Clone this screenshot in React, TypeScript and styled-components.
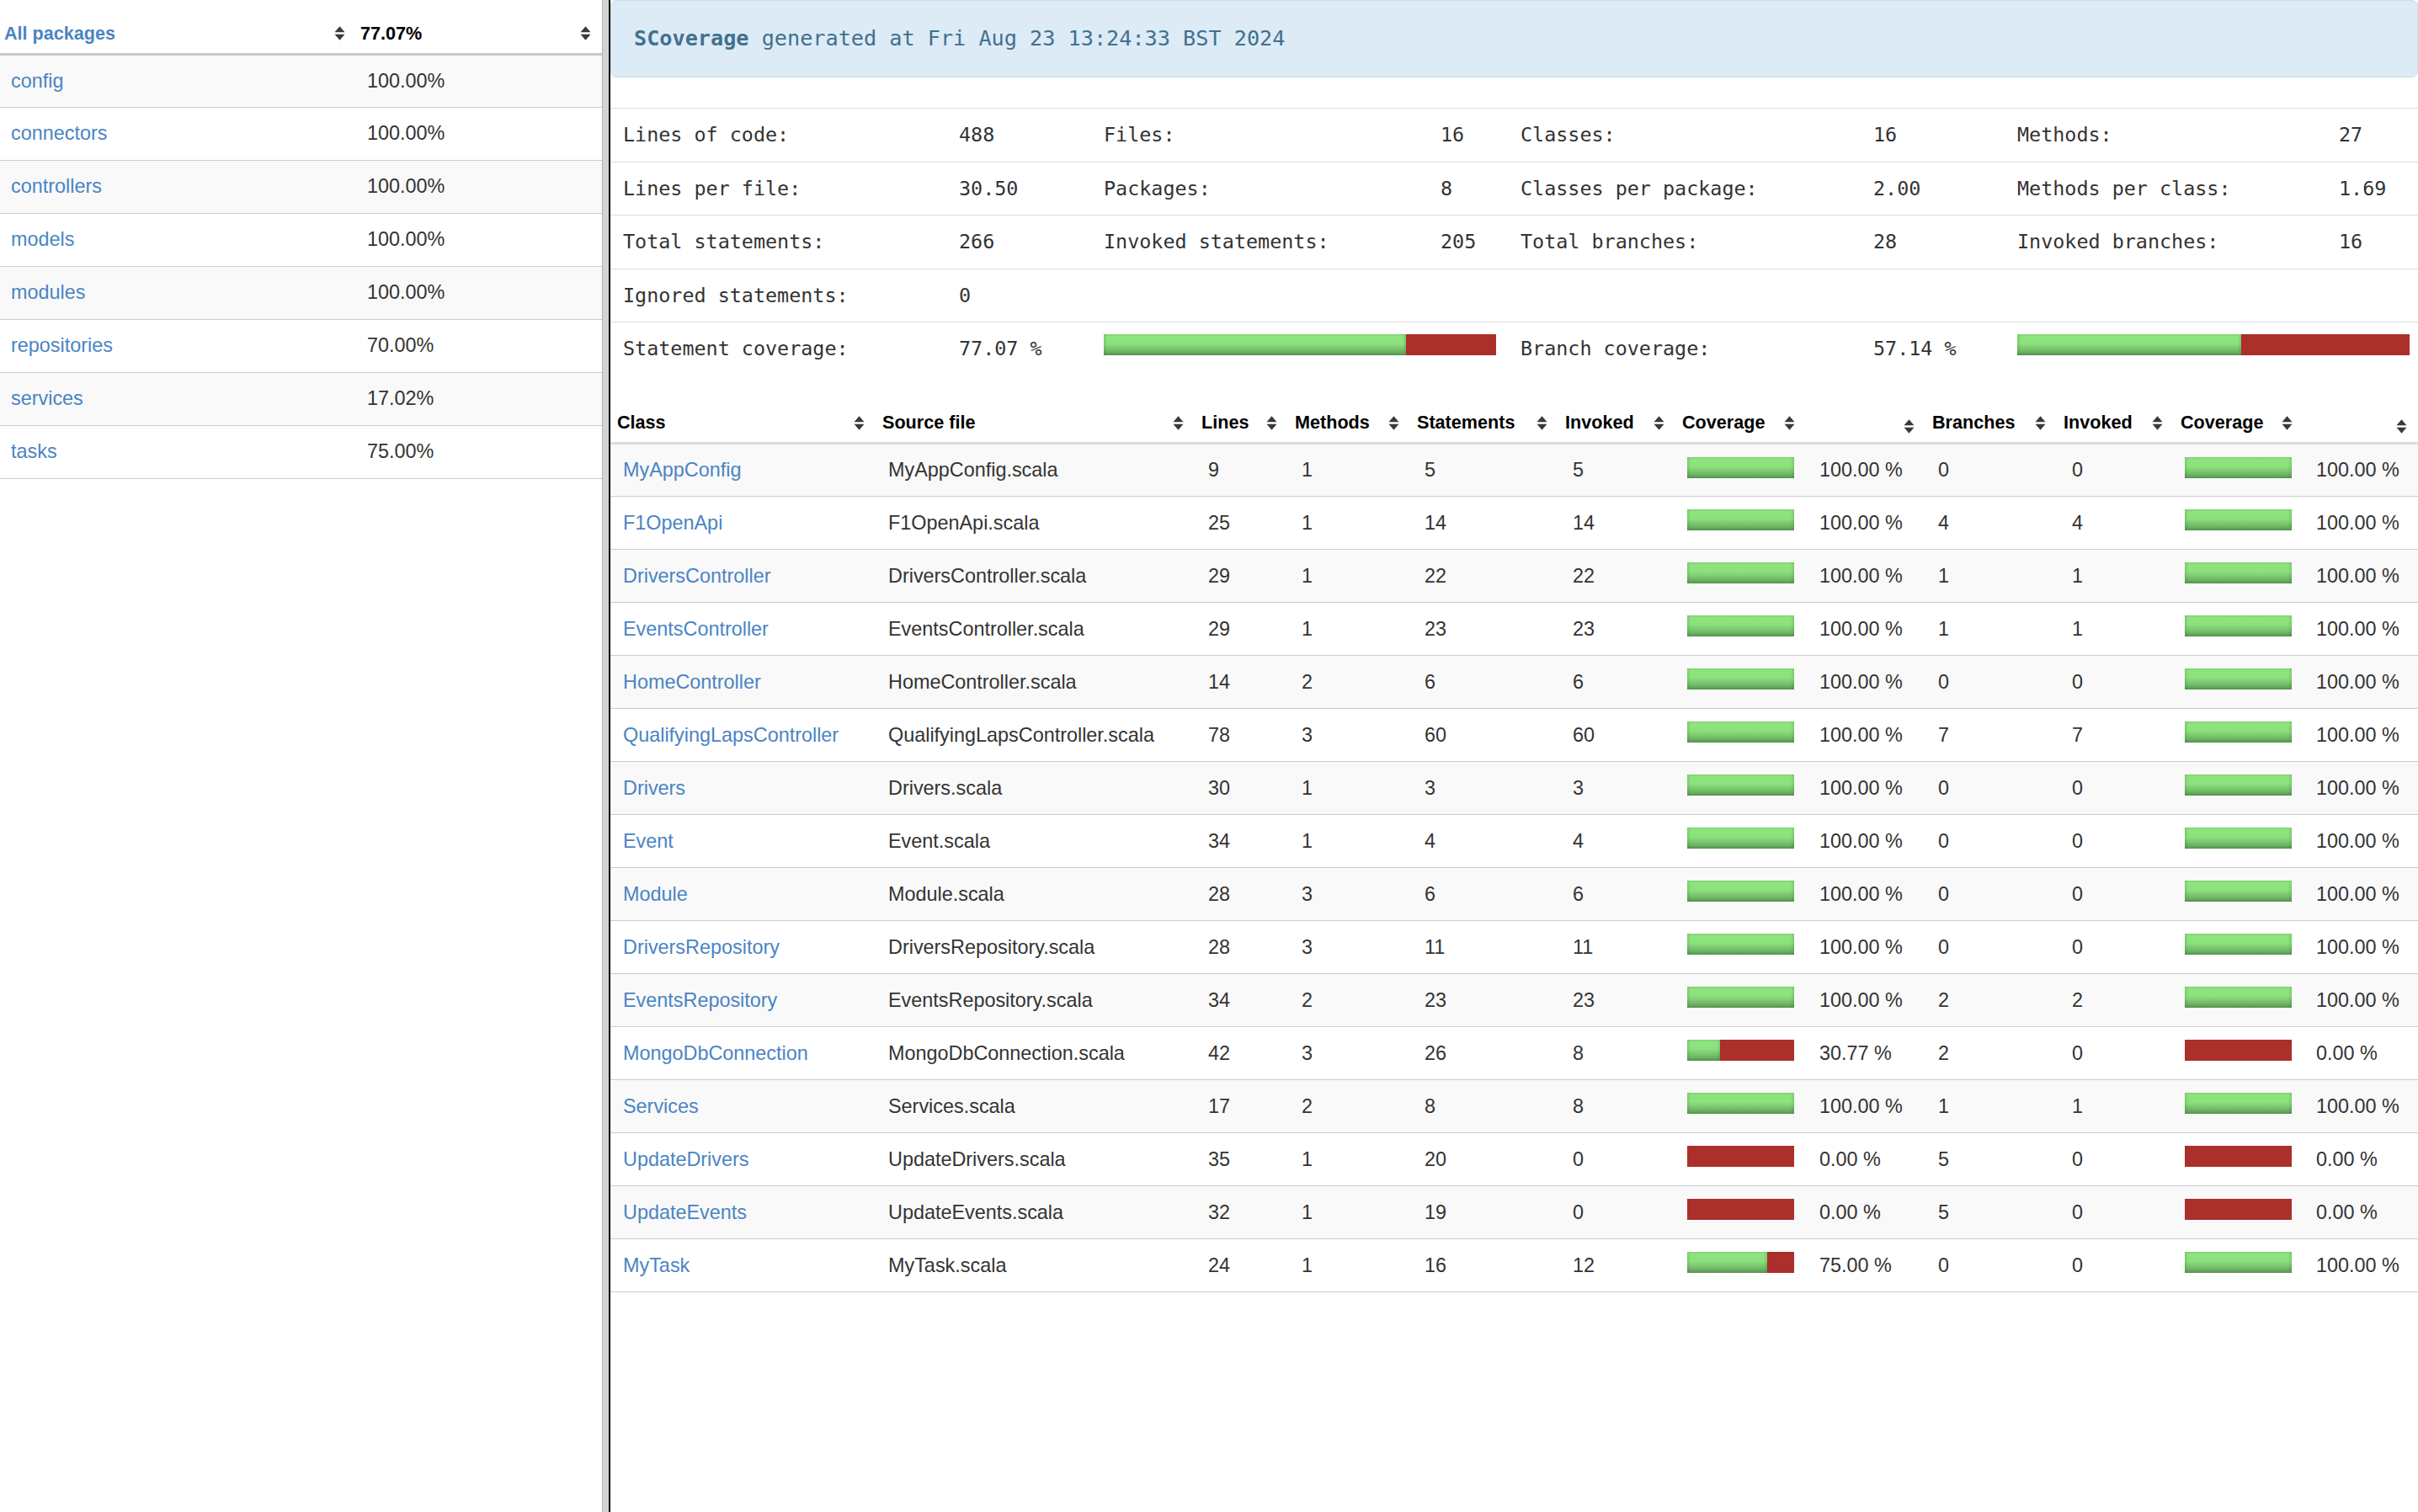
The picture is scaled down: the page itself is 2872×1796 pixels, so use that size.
import React from "react";
import styled, { createGlobalStyle } from "styled-components";

const GlobalStyle = createGlobalStyle`
  html, body { margin: 0; padding: 0; background: #fff; }
  body {
    font-family: "Liberation Sans", Arial, Helvetica, sans-serif;
    font-size: 23.4px;
    color: #333;
  }
  * { box-sizing: border-box; }
`;

const Page = styled.div`
  display: flex;
  width: 100%;
  height: 100vh;
  overflow: hidden;
`;

const LeftFrame = styled.div`
  width: 715px;
  flex: none;
  background: #fff;
`;

const FrameDivider = styled.div`
  width: 10px;
  flex: none;
  background: #d3d3d3;
  border-left: 1px solid #b3b3b3;
  border-right: 2px solid #000;
`;

const RightFrame = styled.div`
  flex: 1;
  min-width: 0;
  background: #fff;
`;

/* ---------- shared table parts ---------- */

const Table = styled.table`
  width: 100%;
  border-collapse: collapse;
  table-layout: fixed;
`;

const HeadCell = styled.th<{ $thick: string }>`
  height: 64px;
  padding: 0;
  vertical-align: bottom;
  text-align: left;
  border-bottom: 3px solid ${(p) => p.$thick};
`;

const HeadInner = styled.div<{ $padLeft: number }>`
  display: flex;
  align-items: center;
  justify-content: space-between;
  padding: 0 13px 10px ${(p) => p.$padLeft}px;
  font-size: 21.6px;
  font-weight: bold;
  line-height: 26px;
  color: #000;
  white-space: nowrap;
`;

const HeadLink = styled.a`
  color: #4a84c4;
  text-decoration: none;
`;

const Row = styled.tr<{ $odd: boolean }>`
  background: ${(p) => (p.$odd ? "#f9f9f9" : "#fff")};
`;

const Cell = styled.td<{ $padLeft: number }>`
  height: 63px;
  padding: 0 0 0 ${(p) => p.$padLeft}px;
  border-bottom: 1px solid #cccccc;
  vertical-align: middle;
  white-space: nowrap;
  line-height: 27px;
  color: #333;
`;

const ItemLink = styled.a`
  color: #4a84c4;
  text-decoration: none;
`;

const SortIcon = () => (
  <svg width="13" height="17" viewBox="0 0 13 17" aria-hidden="true">
    <path d="M0.5 7.3 L6.5 0.3 L12.5 7.3 Z M0.5 9.7 L12.5 9.7 L6.5 16.7 Z" fill="#3a3a3a" />
  </svg>
);

/* ---------- meter ---------- */

const MeterTrack = styled.div<{ $w: number }>`
  display: flex;
  width: ${(p) => p.$w}px;
  height: 25px;
  background: #ab2f2b;
  flex: none;
`;

const MeterCovered = styled.div`
  height: 100%;
  background: linear-gradient(
    to bottom,
    #90e580 0%,
    #8be17b 45%,
    #77c26d 72%,
    #5c9a55 100%
  );
  box-shadow: inset 2px 0 3px rgba(40, 90, 35, 0.18), inset -2px 0 3px rgba(40, 90, 35, 0.18);
`;

const Meter = ({ pct, width }: { pct: number; width: number }) => (
  <MeterTrack $w={width}>
    <MeterCovered style={{ width: `${pct}%` }} />
  </MeterTrack>
);

const MeterCellWrap = styled.div`
  display: flex;
  align-items: center;
  padding-bottom: 7px;
`;

/* ---------- left frame ---------- */

const packages: [string, string][] = [
  ["config", "100.00%"],
  ["connectors", "100.00%"],
  ["controllers", "100.00%"],
  ["models", "100.00%"],
  ["modules", "100.00%"],
  ["repositories", "70.00%"],
  ["services", "17.02%"],
  ["tasks", "75.00%"],
];

const PackageList = () => (
  <Table>
    <colgroup>
      <col style={{ width: 423 }} />
      <col />
    </colgroup>
    <thead>
      <tr>
        <HeadCell $thick="#c9c9c9">
          <HeadInner $padLeft={5}>
            <HeadLink href="#">All packages</HeadLink>
            <SortIcon />
          </HeadInner>
        </HeadCell>
        <HeadCell $thick="#c9c9c9">
          <HeadInner $padLeft={5}>
            <span>77.07%</span>
            <SortIcon />
          </HeadInner>
        </HeadCell>
      </tr>
    </thead>
    <tbody>
      {packages.map(([name, pct], i) => (
        <Row key={name} $odd={i % 2 === 0}>
          <Cell $padLeft={13}>
            <ItemLink href="#">{name}</ItemLink>
          </Cell>
          <Cell $padLeft={13}>{pct}</Cell>
        </Row>
      ))}
    </tbody>
  </Table>
);

/* ---------- banner ---------- */

const Banner = styled.div`
  background: #dcebf6;
  border: 1px solid #c4e1ef;
  border-radius: 7px;
  padding: 30px 27px;
  font-family: "DejaVu Sans Mono", "Liberation Mono", monospace;
  font-size: 25.2px;
  line-height: 30px;
  color: #41718f;
  white-space: nowrap;
`;

const BannerTitle = styled.b`
  font-weight: bold;
`;

/* ---------- overview stats ---------- */

const statCols = "399px 172px 400px 95px 419px 171px 382px 1fr";

const Stats = styled.div`
  margin-top: 36px;
  font-family: "DejaVu Sans Mono", "Liberation Mono", monospace;
  font-size: 23.4px;
  color: #333;
`;

const StatRow = styled.div`
  display: grid;
  grid-template-columns: ${statCols};
  height: 63.5px;
  align-items: center;
  border-top: 1px solid #dddddd;
`;

const StatCell = styled.div<{ $span?: number }>`
  padding-left: 15px;
  white-space: nowrap;
  grid-column: span ${(p) => p.$span ?? 1};
  display: flex;
  align-items: center;
`;

const StatMeterCell = styled(StatCell)`
  padding-bottom: 9px;
`;

const statRows: [string, string][][] = [
  [
    ["Lines of code:", "488"],
    ["Files:", "16"],
    ["Classes:", "16"],
    ["Methods:", "27"],
  ],
  [
    ["Lines per file:", "30.50"],
    ["Packages:", "8"],
    ["Classes per package:", "2.00"],
    ["Methods per class:", "1.69"],
  ],
  [
    ["Total statements:", "266"],
    ["Invoked statements:", "205"],
    ["Total branches:", "28"],
    ["Invoked branches:", "16"],
  ],
];

const OverviewStats = () => (
  <Stats>
    {statRows.map((row, i) => (
      <StatRow key={i}>
        {row.map(([label, value]) => (
          <React.Fragment key={label}>
            <StatCell>{label}</StatCell>
            <StatCell>{value}</StatCell>
          </React.Fragment>
        ))}
      </StatRow>
    ))}
    <StatRow>
      <StatCell>Ignored statements:</StatCell>
      <StatCell>0</StatCell>
    </StatRow>
    <StatRow>
      <StatCell>Statement coverage:</StatCell>
      <StatCell>77.07 %</StatCell>
      <StatMeterCell $span={2}>
        <Meter pct={77.07} width={466} />
      </StatMeterCell>
      <StatCell>Branch coverage:</StatCell>
      <StatCell>57.14 %</StatCell>
      <StatMeterCell $span={2}>
        <Meter pct={57.14} width={466} />
      </StatMeterCell>
    </StatRow>
  </Stats>
);

/* ---------- classes table ---------- */

const ClassTableWrap = styled.div`
  margin-top: 17px;
`;

const colWidths = [315, 379, 111, 145, 176, 139, 155, 142, 156, 139, 154, 136];
const headers = [
  "Class",
  "Source file",
  "Lines",
  "Methods",
  "Statements",
  "Invoked",
  "Coverage",
  "",
  "Branches",
  "Invoked",
  "Coverage",
  "",
];

type ClassRow = {
  name: string;
  lines: number;
  methods: number;
  stmts: number;
  invoked: number;
  cov: number;
  branches: number;
  bInvoked: number;
  bCov: number;
};

const classes: ClassRow[] = [
  { name: "MyAppConfig", lines: 9, methods: 1, stmts: 5, invoked: 5, cov: 100, branches: 0, bInvoked: 0, bCov: 100 },
  { name: "F1OpenApi", lines: 25, methods: 1, stmts: 14, invoked: 14, cov: 100, branches: 4, bInvoked: 4, bCov: 100 },
  { name: "DriversController", lines: 29, methods: 1, stmts: 22, invoked: 22, cov: 100, branches: 1, bInvoked: 1, bCov: 100 },
  { name: "EventsController", lines: 29, methods: 1, stmts: 23, invoked: 23, cov: 100, branches: 1, bInvoked: 1, bCov: 100 },
  { name: "HomeController", lines: 14, methods: 2, stmts: 6, invoked: 6, cov: 100, branches: 0, bInvoked: 0, bCov: 100 },
  { name: "QualifyingLapsController", lines: 78, methods: 3, stmts: 60, invoked: 60, cov: 100, branches: 7, bInvoked: 7, bCov: 100 },
  { name: "Drivers", lines: 30, methods: 1, stmts: 3, invoked: 3, cov: 100, branches: 0, bInvoked: 0, bCov: 100 },
  { name: "Event", lines: 34, methods: 1, stmts: 4, invoked: 4, cov: 100, branches: 0, bInvoked: 0, bCov: 100 },
  { name: "Module", lines: 28, methods: 3, stmts: 6, invoked: 6, cov: 100, branches: 0, bInvoked: 0, bCov: 100 },
  { name: "DriversRepository", lines: 28, methods: 3, stmts: 11, invoked: 11, cov: 100, branches: 0, bInvoked: 0, bCov: 100 },
  { name: "EventsRepository", lines: 34, methods: 2, stmts: 23, invoked: 23, cov: 100, branches: 2, bInvoked: 2, bCov: 100 },
  { name: "MongoDbConnection", lines: 42, methods: 3, stmts: 26, invoked: 8, cov: 30.77, branches: 2, bInvoked: 0, bCov: 0 },
  { name: "Services", lines: 17, methods: 2, stmts: 8, invoked: 8, cov: 100, branches: 1, bInvoked: 1, bCov: 100 },
  { name: "UpdateDrivers", lines: 35, methods: 1, stmts: 20, invoked: 0, cov: 0, branches: 5, bInvoked: 0, bCov: 0 },
  { name: "UpdateEvents", lines: 32, methods: 1, stmts: 19, invoked: 0, cov: 0, branches: 5, bInvoked: 0, bCov: 0 },
  { name: "MyTask", lines: 24, methods: 1, stmts: 16, invoked: 12, cov: 75, branches: 0, bInvoked: 0, bCov: 100 },
];

const fmt = (n: number) => `${n.toFixed(2)} %`;

const ClassTable = () => (
  <ClassTableWrap>
    <Table>
      <colgroup>
        {colWidths.map((w, i) => (
          <col key={i} style={{ width: w }} />
        ))}
      </colgroup>
      <thead>
        <tr>
          {headers.map((h, i) => (
            <HeadCell key={i} $thick="#dcdcdc">
              <HeadInner $padLeft={8}>
                <span>{h}</span>
                <SortIcon />
              </HeadInner>
            </HeadCell>
          ))}
        </tr>
      </thead>
      <tbody>
        {classes.map((c, i) => (
          <Row key={c.name} $odd={i % 2 === 0}>
            <Cell $padLeft={15}>
              <ItemLink href="#">{c.name}</ItemLink>
            </Cell>
            <Cell $padLeft={15}>{c.name}.scala</Cell>
            <Cell $padLeft={16}>{c.lines}</Cell>
            <Cell $padLeft={16}>{c.methods}</Cell>
            <Cell $padLeft={17}>{c.stmts}</Cell>
            <Cell $padLeft={17}>{c.invoked}</Cell>
            <Cell $padLeft={14}>
              <MeterCellWrap>
                <Meter pct={c.cov} width={127} />
              </MeterCellWrap>
            </Cell>
            <Cell $padLeft={16}>{fmt(c.cov)}</Cell>
            <Cell $padLeft={15}>{c.branches}</Cell>
            <Cell $padLeft={18}>{c.bInvoked}</Cell>
            <Cell $padLeft={13}>
              <MeterCellWrap>
                <Meter pct={c.bCov} width={127} />
              </MeterCellWrap>
            </Cell>
            <Cell $padLeft={15}>{fmt(c.bCov)}</Cell>
          </Row>
        ))}
      </tbody>
    </Table>
  </ClassTableWrap>
);

export default function App() {
  return (
    <>
      <GlobalStyle />
      <Page>
        <LeftFrame>
          <PackageList />
        </LeftFrame>
        <FrameDivider />
        <RightFrame>
          <Banner>
            <BannerTitle>SCoverage</BannerTitle> generated at Fri Aug 23 13:24:33 BST 2024
          </Banner>
          <OverviewStats />
          <ClassTable />
        </RightFrame>
      </Page>
    </>
  );
}
